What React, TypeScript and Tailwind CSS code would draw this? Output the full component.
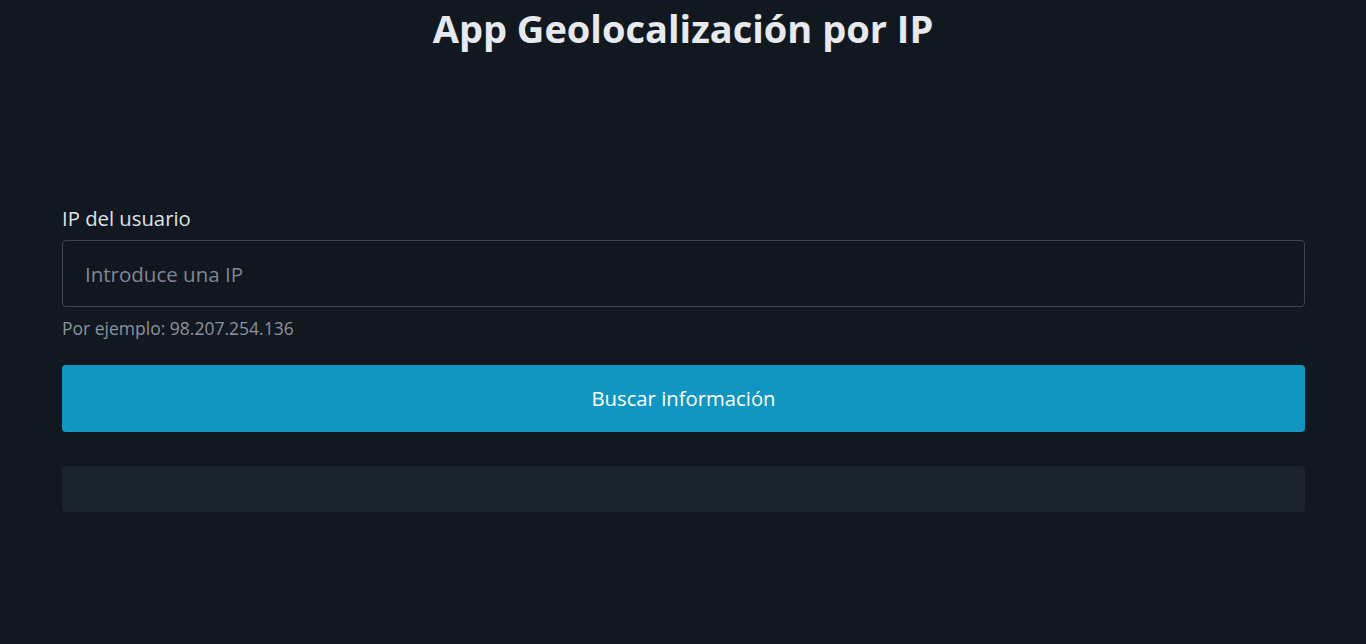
import { useState } from "react"

export default function App() {
  const [ip, setIp] = useState("")

  return (
    <div className="min-h-screen bg-[#121820] text-[#e5e9ee] font-['Open_Sans',sans-serif]">
      {/* Header */}
      <h1 className="text-center text-[38px] font-bold leading-[56px] text-[#e6eaef]">App Geolocalización por IP</h1>

      {/* Form */}
      <div className="ml-[62px] mr-[61px] mt-[148px]">
        <label className="block text-[20.3px] leading-[28px] text-[#dde2e7]">IP del usuario</label>
        <input
          value={ip}
          onChange={(e) => setIp(e.target.value)}
          placeholder="Introduce una IP"
          className="mt-[8px] block h-[67px] w-full rounded-[4px] border border-[#3a4552] bg-[#11171e] px-[22px] text-[20.5px] text-[#dde2e7] placeholder:text-[#7e8894] outline-none"
        />
        <p className="mt-[10px] text-[17.5px] leading-[22px] text-[#8a939e]">Por ejemplo: 98.207.254.136</p>

        <button className="mt-[26px] block h-[67px] w-full rounded-[4px] bg-[#1196c2] text-[20.3px] text-white">
          Buscar información
        </button>

        {/* Result */}
        <div className="mt-[34px] h-[46px] rounded-[4px] bg-[#1b232c]"></div>
      </div>
    </div>
  )
}
